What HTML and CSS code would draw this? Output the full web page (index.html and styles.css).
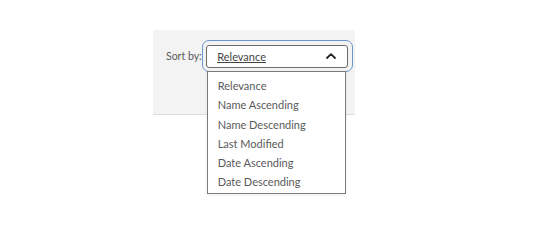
FILE: index.html
```html
<!DOCTYPE html>
<html>
<head>
<meta charset="utf-8">
<link rel="stylesheet" href="styles.css">
</head>
<body>
<div class="panel">
  <div class="sort">
    <span class="label">Sort by:</span>
    <div class="ring">
      <div class="select">
        <span class="value">Relevance</span>
        <svg class="chev" width="10" height="6" viewBox="0 0 10 6"><path d="M1 5 L5 1.2 L9 5" fill="none" stroke="#222" stroke-width="1.8" stroke-linecap="round" stroke-linejoin="round"/></svg>
      </div>
      <ul class="menu">
        <li>Relevance</li>
        <li>Name Ascending</li>
        <li>Name Descending</li>
        <li>Last Modified</li>
        <li>Date Ascending</li>
        <li>Date Descending</li>
      </ul>
    </div>
  </div>
</div>
</body>
</html>
```
FILE: styles.css
```css
html, body { margin: 0; padding: 0; background: #fff; }
body { min-height: 237px; font-family: Lato, "Liberation Sans", sans-serif; color: #555; }
.panel {
  margin: 30px 0 0 153px;
  width: 202px;
  height: 85px;
  background: #f3f3f3;
  border-bottom: 1px solid #dedede;
  box-sizing: border-box;
}
.sort {
  display: flex;
  align-items: center;
  padding: 10px 0 0 13px;
}
.label { font-size: 10.5px; color: #5a5a5a; margin-right: 0; white-space: nowrap; }
.ring {
  position: relative;
  border: 1.5px solid #6a98cc;
  border-radius: 7px;
  padding: 3.5px;
}
.select {
  width: 142px;
  height: 23px;
  box-sizing: border-box;
  border: 1px solid #6b6b6b;
  border-radius: 3px;
  background: #fff;
  display: flex;
  align-items: center;
  justify-content: space-between;
  padding: 0 11px 0 10px;
}
.value { font-size: 11px; color: #444; text-decoration: underline; }
.chev { display: block; }
.menu {
  position: absolute;
  z-index: 2;
  left: 4px;
  top: 30px;
  width: 139px;
  height: 123px;
  box-sizing: border-box;
  margin: 0;
  padding: 4px 0 0 0;
  list-style: none;
  background: #fff;
  border: 1px solid #7a7a7a;
  box-shadow: 0 1px 3px rgba(0,0,0,0.08);
}
.menu li {
  font-size: 11px;
  color: #5a5a5a;
  padding: 0 0 0 10px;
  height: 19.3px;
  line-height: 19.3px;
}
```
